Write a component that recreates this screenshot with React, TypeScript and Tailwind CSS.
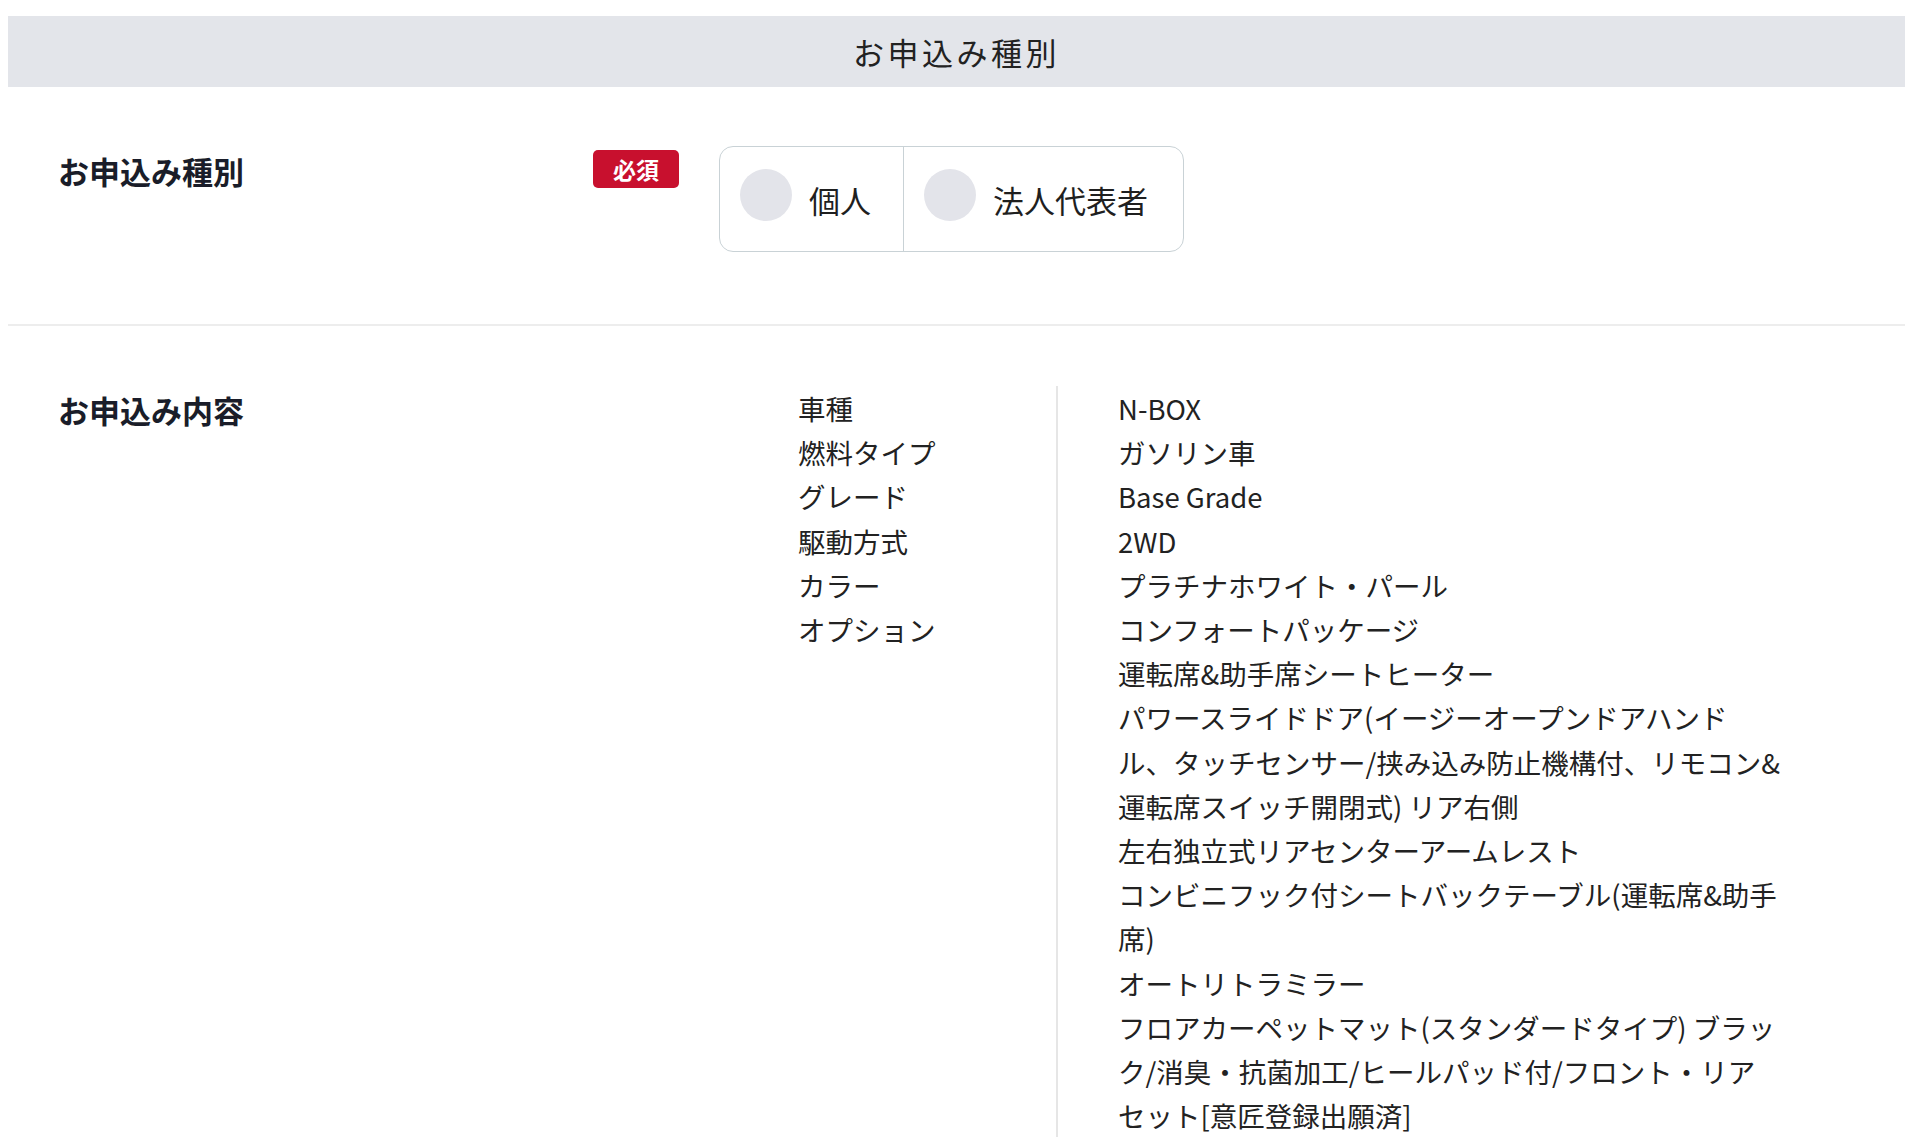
import React from "react";

const SPECS: { label: string }[] = [
  { label: "車種" },
  { label: "燃料タイプ" },
  { label: "グレード" },
  { label: "駆動方式" },
  { label: "カラー" },
  { label: "オプション" },
];

const VALUES = [
  "N-BOX",
  "ガソリン車",
  "Base Grade",
  "2WD",
  "プラチナホワイト・パール",
  "コンフォートパッケージ",
  "運転席&助手席シートヒーター",
  "パワースライドドア(イージーオープンドアハンドル、タッチセンサー/挟み込み防止機構付、リモコン&運転席スイッチ開閉式) リア右側",
  "左右独立式リアセンターアームレスト",
  "コンビニフック付シートバックテーブル(運転席&助手席)",
  "オートリトラミラー",
  "フロアカーペットマット(スタンダードタイプ) ブラック/消臭・抗菌加工/ヒールパッド付/フロント・リアセット[意匠登録出願済]",
];

function RadioOption({ label, last }: { label: string; last?: boolean }) {
  return (
    <label
      className={`flex h-full cursor-pointer items-center gap-[17px] pl-[20px] ${
        last ? "pr-[35px]" : "border-r-[1.5px] border-[#c9d2d6] pr-[32px]"
      }`}
    >
      <span className="mb-2 h-[52px] w-[52px] shrink-0 rounded-full bg-[#e3e4ea]" />
      <span className="text-[31px] leading-none text-[#1f1f1f]">{label}</span>
    </label>
  );
}

export default function App() {
  return (
    <div className="min-h-screen bg-white font-['Noto_Sans_CJK_JP',sans-serif]">
      <div className="ml-2 mr-[15px] pt-4">
        {/* Section header */}
        <div className="flex h-[71px] items-center justify-center bg-[#e3e5ea]">
          <h2 className="mt-[2px] text-[31px] font-normal tracking-[3.5px] text-[#222]">
            お申込み種別
          </h2>
        </div>

        {/* Application type */}
        <div className="flex items-start pb-[72px] pl-[50px] pt-[59px]">
          <div className="mt-[2px] w-[535px] text-[31px] font-bold leading-[1.5] text-[#1a1d29]">
            お申込み種別
          </div>
          <span className="mt-[4px] flex h-[38px] w-[86px] items-center justify-center rounded-[5px] bg-[#c8102e] text-[23px] font-bold text-white">
            必須
          </span>
          <div className="ml-[40px] flex h-[106px] overflow-hidden rounded-[14px] border-[1.5px] border-[#c9d2d6]">
            <RadioOption label="個人" />
            <RadioOption label="法人代表者" last />
          </div>
        </div>

        <div className="border-t-2 border-[#ededed]" />

        {/* Application contents */}
        <div className="flex items-start pl-[50px] pt-[60px]">
          <div className="mt-[1px] w-[740px] text-[31px] font-bold leading-[1.5] text-[#1a1d29]">
            お申込み内容
          </div>
          <div className="flex text-[27.5px] leading-[44.2px] text-[#222]">
            <ul className="w-[258px]">
              {SPECS.map((s) => (
                <li key={s.label}>{s.label}</li>
              ))}
            </ul>
            <ul className="border-l-2 border-[#e6e6e6] pl-[60px]">
              {VALUES.map((v) => (
                <li key={v} className="w-[663px]">
                  {v}
                </li>
              ))}
            </ul>
          </div>
        </div>
      </div>
    </div>
  );
}
